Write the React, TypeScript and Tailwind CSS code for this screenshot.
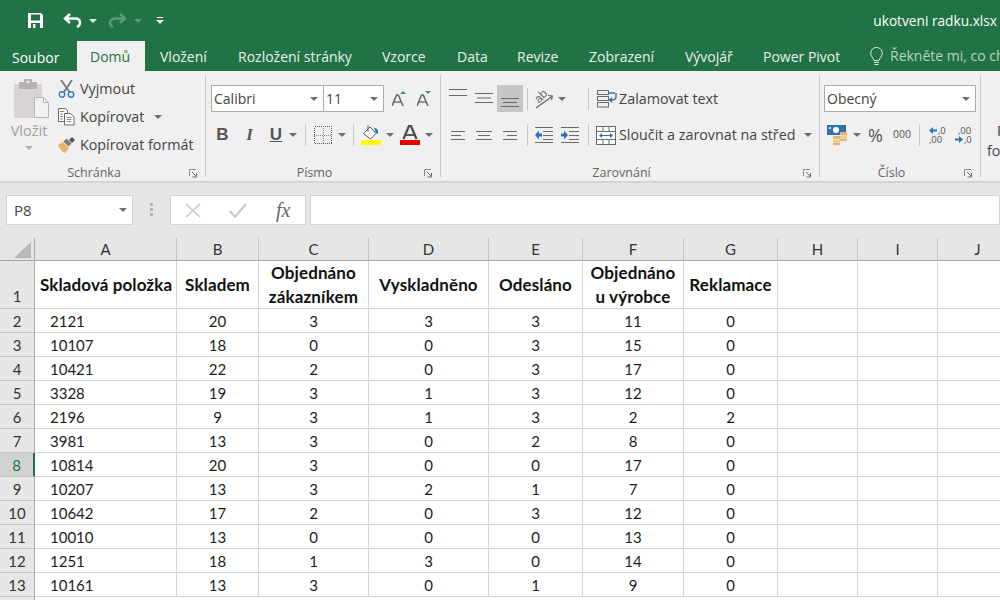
import React from "react";

const Caret = ({ c = "#6f6f6f" }: { c?: string }) => (
  <svg width="8" height="4" viewBox="0 0 8 4" className="block shrink-0">
    <path d="M0 0h8L4 4z" fill={c} />
  </svg>
);

const Launcher = () => (
  <svg width="9" height="9" viewBox="0 0 9 9" className="block shrink-0">
    <path d="M0.5 7V0.5H7" fill="none" stroke="#8a8a8a" />
    <path d="M3 3l4 4M7.500 4v4h-4" fill="none" stroke="#6a6a6a" />
  </svg>
);

const Sep = ({ h = "h-[22px]" }: { h?: string }) => <div className={`w-px ${h} bg-[#c6c6c6] shrink-0`} />;

const Lines = ({ w, x = [0, 0, 0, 0], n = 3, gap = 4 }: { w: number[]; x?: number[]; n?: number; gap?: number }) => (
  <svg width="18" height={(n - 1) * gap + 2} className="block">
    {w.slice(0, n).map((l, i) => (
      <rect key={i} x={x[i]} y={i * gap} width={l} height="1" fill="#6a6a6a" />
    ))}
  </svg>
);

const SaveIcon = () => (
  <svg width="17" height="17" viewBox="0 0 17 17" className="block">
    <path d="M1 1h13l2 2v13H1z" fill="#fff" />
    <rect x="4" y="2.500" width="9" height="6" fill="#217346" />
    <rect x="4" y="11" width="9" height="5" fill="#217346" />
    <rect x="6" y="12" width="2.500" height="4" fill="#fff" />
  </svg>
);

const UndoIcon = ({ c = "#fff" }: { c?: string }) => (
  <svg width="19" height="15" viewBox="0 0 19 15" className="block">
    <path d="M7 1L2 5.500 7 10" fill="none" stroke={c} strokeWidth="2.400" />
    <path d="M3 5.500h9c3.500 0 5 2 5 4s-1 3.500-3 4.500" fill="none" stroke={c} strokeWidth="2.400" />
  </svg>
);

const RedoIcon = ({ c = "#fff" }: { c?: string }) => (
  <svg width="19" height="15" viewBox="0 0 19 15" className="block">
    <path d="M12 1l5 4.500L12 10" fill="none" stroke={c} strokeWidth="2.400" />
    <path d="M16 5.500H7C3.500 5.500 2 7.500 2 9.500s1 3.500 3 4.500" fill="none" stroke={c} strokeWidth="2.400" />
  </svg>
);

const PasteIcon = () => (
  <svg width="36" height="40" viewBox="0 0 36 40" className="block">
    <rect x="0" y="5" width="28" height="34" rx="1" fill="#d8d4d6" />
    <rect x="5" y="3" width="18" height="7" fill="#b5b2b3" />
    <rect x="10" y="0" width="8" height="5" rx="1" fill="#b5b2b3" />
    <rect x="12.500" y="2" width="3" height="2" fill="#e8e8e8" />
    <path d="M20.500 18.500h9l5 5v15h-14z" fill="#f3f1f3" stroke="#b9b6b8" />
    <path d="M29.500 18.500v5h5" fill="none" stroke="#b9b6b8" />
  </svg>
);

const CutIcon = () => (
  <svg width="18" height="18" viewBox="0 0 18 18" className="block">
    <path d="M3 0l8.500 12M14 0L6 12" fill="none" stroke="#777" strokeWidth="1.800" />
    <circle cx="4" cy="14.500" r="2.700" fill="none" stroke="#3f78b5" strokeWidth="1.400" />
    <circle cx="13" cy="14.500" r="2.700" fill="none" stroke="#3f78b5" strokeWidth="1.400" />
  </svg>
);

const CopyIcon = () => (
  <svg width="17" height="18" viewBox="0 0 17 18" className="block">
    <path d="M0.500 0.500h7l2 2v3h-3v8h-6z" fill="#fff" stroke="#6a6a6a" />
    <path d="M6.500 5.500h6l3.500 3.500v8H6.500z" fill="#fff" stroke="#6a6a6a" />
    <path d="M2 3.500h4M2 6h3M2 8.500h3M2 11h3M8.500 9.500h5M8.500 11.500h5M8.500 13.500h5" stroke="#8a8a8a" />
  </svg>
);

const BrushIcon = () => (
  <svg width="18" height="16" viewBox="0 0 18 16" className="block">
    <path d="M0 8l5-3 6 6-4 5c-2 0-5-4-7-8z" fill="#e8b463" />
    <path d="M5.500 4.500l3-3 5 5-3 3z" fill="#7a7a7a" />
    <path d="M11 3l3-3 3 3-3 3z" fill="#555" />
  </svg>
);

const GrowA = ({ up }: { up: boolean }) => (
  <svg width="15" height="15" viewBox="0 0 15 15" className="block">
    <path d="M0 15L4.500 4h1.800L11 15" fill="none" stroke="#6a6a6a" strokeWidth="1.600" />
    <path d="M2 11h7" stroke="#6a6a6a" strokeWidth="1.400" />
    {up ? <path d="M8 3l3-3 3 3z" fill="#4b7fb3" /> : <path d="M8 0h6l-3 3z" fill="#4b7fb3" />}
  </svg>
);

const BordersIcon = () => (
  <svg width="18" height="18" viewBox="0 0 18 18" className="block" shapeRendering="crispEdges">
    <rect x="0.500" y="0.500" width="17" height="17" fill="none" stroke="#5a5a5a" strokeDasharray="1 1" />
    <path d="M9.500 0v18M0 9.500h18" stroke="#8a8a8a" strokeDasharray="1 1" />
  </svg>
);

const FillIcon = () => (
  <svg width="20" height="20" viewBox="0 0 20 20" className="block">
    <path d="M2.500 8.500L9 2l6 6.500-5.500 5.500z" fill="#fff" stroke="#555" />
    <path d="M7 0.500v6" stroke="#555" />
    <path d="M13 3c3 0 4.500 2 4 6l-2-1z" fill="#2f72b0" />
    <rect x="0" y="15" width="20" height="5" fill="#ffff00" />
  </svg>
);

const FontColorIcon = () => (
  <svg width="20" height="20" viewBox="0 0 20 20" className="block">
    <path d="M3.500 14L9 1h2l5.500 13" fill="none" stroke="#4a4a4a" strokeWidth="2.200" />
    <path d="M6 10h8" stroke="#4a4a4a" strokeWidth="1.800" />
    <rect x="0" y="15" width="20" height="5" fill="#e60000" />
  </svg>
);

const OrientIcon = () => (
  <svg width="20" height="20" viewBox="0 0 20 20" className="block overflow-visible">
    <path d="M2 19L18 7.500M14 6.500l4.500.5-1 4" fill="none" stroke="#666" strokeWidth="1.200" />
    <g transform="rotate(-45 7 7)">
      <text x="0" y="11" fontSize="12" fill="#6a6a6a" fontFamily="Liberation Sans, sans-serif">ab</text>
    </g>
  </svg>
);

const WrapIcon = () => (
  <svg width="20" height="18" viewBox="0 0 20 18" className="block">
    <rect x="0.500" y="0.500" width="11" height="4" fill="none" stroke="#6a6a6a" />
    <rect x="0.500" y="6.500" width="11" height="4" fill="none" stroke="#6a6a6a" />
    <rect x="0.500" y="12.500" width="11" height="4.500" fill="none" stroke="#6a6a6a" />
    <path d="M12 3h6M19 3v4c0 2-2 3-5 3" fill="none" stroke="#2f72b0" strokeWidth="1.400" />
    <path d="M15 7l-3.500 3 3.500 3z" fill="#2f72b0" />
  </svg>
);

const MergeIcon = () => (
  <svg width="20" height="19" viewBox="0 0 20 19" className="block">
    <rect x="0.500" y="0.500" width="19" height="18" fill="#fff" stroke="#6a6a6a" />
    <path d="M0 5.500h20M0 13.500h20M7 0v5M13 0v5M7 14v5M13 14v5" stroke="#6a6a6a" />
    <path d="M4 9.500h12" stroke="#2f72b0" />
    <path d="M6 7l-3 2.500L6 12zM14 7l3 2.500-3 2.500z" fill="#2f72b0" />
  </svg>
);

const IndentIcon = ({ right }: { right: boolean }) => (
  <svg width="18" height="16" viewBox="0 0 18 16" className="block">
    <path d="M0 .5h18M8 4.500h10M8 8.500h10M8 12.500h10M0 15.500h18" stroke="#6a6a6a" fill="none" />
    {right ? (
      <path d="M0 6.500h3V3.500l4 4.500-4 4.500V9.500H0z" fill="#2f72b0" />
    ) : (
      <path d="M7 6.500H4V3.500L0 8l4 4.500V9.500h3z" fill="#2f72b0" />
    )}
  </svg>
);

const CurrencyIcon = () => (
  <svg width="20" height="20" viewBox="0 0 20 20" className="block">
    <rect x="0" y="0" width="19" height="10" fill="#2f72b0" />
    <circle cx="9" cy="5" r="3" fill="#fff" />
    <rect x="2" y="2" width="2" height="2" fill="#cfe0f0" />
    <rect x="6" y="11" width="7" height="3" fill="#e9b46b" />
    <rect x="6" y="14.500" width="7" height="2.500" fill="#f1c98f" />
    <rect x="6" y="17.500" width="7" height="2.500" fill="#e9b46b" />
    <rect x="13" y="7" width="7" height="3" fill="#e9b46b" />
    <rect x="13" y="10.500" width="7" height="2.500" fill="#f1c98f" />
    <rect x="13" y="13.500" width="7" height="2.500" fill="#e9b46b" />
  </svg>
);

const Arrow = ({ left }: { left: boolean }) => (
  <svg width="8" height="7" viewBox="0 0 8 7" className="block shrink-0">
    {left ? <path d="M8 2.500H4V0L0 3.500 4 7V4.500h4z" fill="#2f72b0" /> : <path d="M0 2.500h4V0l4 3.500L4 7V4.500H0z" fill="#2f72b0" />}
  </svg>
);

const Combo = ({ text, w }: { text: string; w: string }) => (
  <div className={`${w} h-[27px] bg-white border border-[#ababab] flex items-center justify-between pl-[2px] pr-[5px] text-[14px] text-[#444] shrink-0`}>
    <span>{text}</span>
    <Caret />
  </div>
);

const GroupLabel = ({ label }: { label: string }) => (
  <div className="h-[12px] pt-[4px] flex items-center text-[12.500px] text-[#666]">
    <span className="flex-1 text-center">{label}</span>
    <span className="w-[17px] pr-[7px] flex justify-end">
      <Launcher />
    </span>
  </div>
);

const tabs: [string, string][] = [
  ["Vložení", "w-[78px]"],
  ["Rozložení stránky", "w-[144px]"],
  ["Vzorce", "w-[75px]"],
  ["Data", "w-[60px]"],
  ["Revize", "w-[72px]"],
  ["Zobrazení", "w-[96px]"],
  ["Vývojář", "w-[78px]"],
  ["Power Pivot", "w-[107px]"],
];

const cols = ["A", "B", "C", "D", "E", "F", "G", "H", "I", "J"];
const data: (string | number)[][] = [
  [2121, 20, 3, 3, 3, 11, 0],
  [10107, 18, 0, 0, 3, 15, 0],
  [10421, 22, 2, 0, 3, 17, 0],
  [3328, 19, 3, 1, 3, 12, 0],
  [2196, 9, 3, 1, 3, 2, 2],
  [3981, 13, 3, 0, 2, 8, 0],
  [10814, 20, 3, 0, 0, 17, 0],
  [10207, 13, 3, 2, 1, 7, 0],
  [10642, 17, 2, 0, 3, 12, 0],
  [10010, 13, 0, 0, 0, 13, 0],
  [1251, 18, 1, 3, 0, 14, 0],
  [10161, 13, 3, 0, 1, 9, 0],
];

const BoldCell = ({ children, left }: { children?: React.ReactNode; left?: boolean }) => (
  <div className={`border-r border-b border-[#d4d4d4] flex flex-col justify-center font-bold text-[17px] tracking-[0.1px] text-[#111] leading-[24px] whitespace-nowrap ${left ? "pl-[5px] text-left" : "text-center"}`}>
    {children}
  </div>
);

export default function App() {
  return (
    <div className="w-[1000px] h-[600px] overflow-hidden bg-white font-['Open_Sans',sans-serif]">
      {/* title bar */}
      <div className="h-[41px] bg-[#217346] flex items-center text-white">
        <div className="ml-[27px]"><SaveIcon /></div>
        <div className="ml-[19px]"><UndoIcon /></div>
        <div className="ml-[7px]"><Caret c="#e6efe9" /></div>
        <div className="ml-[11px]"><RedoIcon c="#5d9c7b" /></div>
        <div className="ml-[7px]"><Caret c="#5d9c7b" /></div>
        <div className="ml-[14px] flex flex-col items-center gap-[2px]">
          <div className="w-[6px] h-px bg-white" />
          <Caret c="#ffffff" />
        </div>
        <div className="ml-auto mr-[3px] mt-[1px] text-[13.700px]">ukotveni radku.xlsx</div>
      </div>
      {/* tabs */}
      <div className="h-[30px] bg-[#217346] flex text-[14px] text-white">
        <div className="w-[77px] pl-[12px] pt-[6px]">Soubor</div>
        <div className="w-[68px] pl-[13px] pt-[5px] bg-[#f0f0f0] text-[#217346]">Domů</div>
        {tabs.map(([t, w]) => (
          <div key={t} className={`${w} pl-[15px] pt-[5px] whitespace-nowrap text-[#e8f1ec]`}>{t}</div>
        ))}
        <div className="pl-[15px] flex items-center gap-[7px] whitespace-nowrap overflow-hidden flex-1">
          <svg width="13" height="19" viewBox="0 0 13 19" className="block shrink-0">
            <path d="M4 13.500C3.500 11 .7 9.500.7 6.200a5.800 5.800 0 0 1 11.600 0C12.300 9.500 9.500 11 9 13.500z" fill="none" stroke="#dfeae4" />
            <path d="M4 15.500h5M4.500 17.500h4" stroke="#dfeae4" />
          </svg>
          <span className="text-[#b7d3c4] relative top-[-1px]">Řekněte mi, co chcete udělat</span>
        </div>
      </div>
      {/* ribbon */}
      <div className="h-[112px] bg-[#f0f0f0] border-b-2 border-[#d4d4d4] flex py-[4px] text-[14.300px] text-[#444]">
        {/* Schránka */}
        <div className="w-[206px] border-r border-[#c9c9c9] flex flex-col shrink-0">
          <div className="flex-1 flex">
            <div className="w-[58px] flex flex-col items-center">
              <div className="mt-[4px] ml-[6px]"><PasteIcon /></div>
              <div className="text-[#9f9f9f] mt-[2px] leading-[20px] text-[14.500px]">Vložit</div>
              <div className="mt-[5px]"><Caret c="#b0b0b0" /></div>
            </div>
            <div className="flex flex-col">
              {[
                [<CutIcon />, "Vyjmout", false],
                [<CopyIcon />, "Kopírovat", true],
                [<BrushIcon />, "Kopírovat formát", false],
              ].map(([ic, t, car], i) => (
                <div key={i} className="h-[28px] flex items-center whitespace-nowrap">
                  <div className="w-[22px]">{ic as React.ReactNode}</div>
                  <span>{t as string}</span>
                  {car && <span className="ml-[10px]"><Caret /></span>}
                </div>
              ))}
            </div>
          </div>
          <GroupLabel label="Schránka" />
        </div>
        {/* Písmo */}
        <div className="w-[235px] border-r border-[#c9c9c9] flex flex-col shrink-0">
          <div className="flex-1 pt-[10px]">
            <div className="flex items-center pl-[5px]">
              <Combo text="Calibri" w="w-[113px]" />
              <div className="-ml-px"><Combo text="11" w="w-[61px]" /></div>
              <div className="ml-[8px]"><GrowA up /></div>
              <div className="ml-[10px]"><GrowA up={false} /></div>
            </div>
            <div className="flex items-center pl-[5px] mt-[10px] h-[26px] text-[#555]">
              <div className="w-[23px] text-center font-bold text-[17px] font-['Liberation_Sans',sans-serif]">B</div>
              <div className="w-[31px] text-center font-bold italic text-[17px] font-['Liberation_Serif',serif]">I</div>
              <div className="w-[22px] text-center font-bold underline text-[17px] font-['Liberation_Sans',sans-serif]">U</div>
              <div className="w-[12px] flex justify-center"><Caret /></div>
              <div className="w-[12px] flex justify-center"><Sep /></div>
              <div className="w-[24px] flex justify-center"><BordersIcon /></div>
              <div className="w-[14px] flex justify-center"><Caret /></div>
              <div className="w-[8px] flex justify-center"><Sep /></div>
              <div className="w-[28px] flex justify-center"><FillIcon /></div>
              <div className="w-[10px] flex justify-center"><Caret /></div>
              <div className="w-[30px] flex justify-center"><FontColorIcon /></div>
              <div className="w-[8px] flex justify-center"><Caret /></div>
            </div>
          </div>
          <GroupLabel label="Písmo" />
        </div>
        {/* Zarovnání */}
        <div className="w-[379px] border-r border-[#c9c9c9] flex flex-col shrink-0">
          <div className="flex-1 pt-[10px]">
            <div className="flex items-center pl-[4px] h-[27px]">
              <div className="w-[26px] h-[27px] flex justify-center pt-[4px]"><Lines w={[18, 18]} gap={6} n={2} /></div>
              <div className="w-[26px] h-[27px] flex justify-center pt-[8px]"><Lines w={[18, 14, 18]} x={[0, 2, 0]} gap={4.500} /></div>
              <div className="w-[26px] h-[27px] flex justify-center pt-[13px] bg-[#c6c6c6]"><Lines w={[18, 14, 18]} x={[0, 2, 0]} /></div>
              <div className="w-[8px] flex justify-center"><Sep /></div>
              <div className="w-[26px] flex justify-center"><OrientIcon /></div>
              <div className="w-[10px] flex justify-center"><Caret /></div>
              <div className="w-[22px] flex justify-end"><Sep /></div>
              <div className="ml-[8px]"><WrapIcon /></div>
              <span className="ml-[2px] whitespace-nowrap">Zalamovat text</span>
            </div>
            <div className="flex items-center pl-[4px] mt-[10px] h-[26px]">
              <div className="w-[26px] flex justify-center mt-[2px]"><Lines w={[14, 10, 14]} x={[2, 2, 2]} /></div>
              <div className="w-[26px] flex justify-center mt-[2px]"><Lines w={[16, 12, 16]} x={[1, 3, 1]} /></div>
              <div className="w-[26px] flex justify-center mt-[2px]"><Lines w={[14, 10, 14]} x={[2, 6, 2]} /></div>
              <div className="w-[8px] flex justify-center"><Sep /></div>
              <div className="w-[26px] flex justify-center"><IndentIcon right={false} /></div>
              <div className="w-[26px] flex justify-center"><IndentIcon right /></div>
              <div className="w-[6px] flex justify-end"><Sep /></div>
              <div className="ml-[7px]"><MergeIcon /></div>
              <span className="ml-[3px] whitespace-nowrap">Sloučit a zarovnat na střed</span>
              <span className="ml-[9px]"><Caret /></span>
            </div>
          </div>
          <GroupLabel label="Zarovnání" />
        </div>
        {/* Číslo */}
        <div className="w-[161px] border-r border-[#c9c9c9] flex flex-col shrink-0">
          <div className="flex-1 pt-[10px]">
            <div className="pl-[4px]"><Combo text="Obecný" w="w-[152px]" /></div>
            <div className="flex items-center pl-[7px] mt-[10px] h-[26px]">
              <CurrencyIcon />
              <div className="ml-[6px]"><Caret /></div>
              <span className="ml-[7px] text-[18px] leading-none text-[#555]">%</span>
              <span className="ml-[10px] text-[10.500px] text-[#555]">000</span>
              <div className="ml-[8px]"><Sep /></div>
              <div className="ml-[9px] w-[17px] text-[9.500px] leading-[9px] text-[#555]">
                <div className="flex items-center gap-[1px]"><Arrow left /><span>,0</span></div>
                <div>,00</div>
              </div>
              <div className="ml-[9px] w-[17px] text-[9.500px] leading-[9px] text-[#555]">
                <div className="pl-[3px]">,00</div>
                <div className="flex items-center gap-[1px]"><Arrow left={false} /><span>,0</span></div>
              </div>
            </div>
          </div>
          <GroupLabel label="Číslo" />
        </div>
        <div className="flex-1 overflow-hidden pt-[46px] leading-[20px]">
          <div className="pl-[16px]">P</div>
          <div className="pl-[6px]">fo</div>
        </div>
      </div>
      {/* formula bar */}
      <div className="h-[55px] bg-[#e6e6e6] flex items-start pt-[12px]">
        <div className="ml-[6px] w-[127px] h-[30px] bg-white border border-[#d4d4d4] flex items-center justify-between pl-[7px] pr-[5px] text-[15px] text-[#444]">
          <span>P8</span>
          <Caret />
        </div>
        <div className="ml-[17px] mt-[8px] flex flex-col gap-[2px]">
          <div className="w-[3px] h-[3px] bg-[#b5b5b5]" />
          <div className="w-[3px] h-[3px] bg-[#b5b5b5]" />
          <div className="w-[3px] h-[3px] bg-[#b5b5b5]" />
        </div>
        <div className="ml-[17px] w-[136px] h-[30px] bg-white border border-[#d4d4d4] flex items-center">
          <svg width="16" height="15" viewBox="0 0 16 15" className="ml-[14px] block">
            <path d="M1 1l14 13M15 1L1 14" stroke="#c9c9c9" strokeWidth="1.600" />
          </svg>
          <svg width="18" height="15" viewBox="0 0 18 15" className="ml-[28px] block">
            <path d="M1 8l5 6L17 1" fill="none" stroke="#c9c9c9" strokeWidth="2" />
          </svg>
          <span className="ml-[29px] text-[20px] italic font-['Liberation_Serif',serif] text-[#666]">fx</span>
        </div>
        <div className="ml-[4px] flex-1 h-[30px] bg-white border border-[#d4d4d4]" />
      </div>
      {/* sheet */}
      <div className="grid grid-cols-[35px_142px_82px_110px_120px_94px_101px_94px_80px_80px_80px] grid-rows-[23px_48px] auto-rows-[24px] text-[15px] text-[#1c1c1c] font-['Lato','Open_Sans',sans-serif]">
        <div className="bg-[#e6e6e6] border-r border-b border-[#a8a8a8] flex items-end justify-end pr-[3px] pb-[2px]">
          <svg width="17" height="16" viewBox="0 0 17 16" className="block">
            <path d="M17 0v16H0z" fill="#b8b8b8" />
          </svg>
        </div>
        {cols.map((c) => (
          <div key={c} className="bg-[#e6e6e6] border-r border-b border-r-[#c6c6c6] border-b-[#a8a8a8] flex items-center justify-center text-[#333]">{c}</div>
        ))}

        <div className="bg-[#e6e6e6] border-r border-b border-r-[#a8a8a8] border-b-[#c6c6c6] flex items-end justify-center pb-[1px] text-[#333]">1</div>
        <BoldCell left>Skladová položka</BoldCell>
        <BoldCell>Skladem</BoldCell>
        <BoldCell><div>Objednáno</div><div>zákazníkem</div></BoldCell>
        <BoldCell>Vyskladněno</BoldCell>
        <BoldCell>Odesláno</BoldCell>
        <BoldCell><div>Objednáno</div><div>u výrobce</div></BoldCell>
        <BoldCell>Reklamace</BoldCell>
        <BoldCell />
        <BoldCell />
        <BoldCell />

        {data.map((row, i) => {
          const active = i === 6;
          return (
            <React.Fragment key={i}>
              <div
                className={
                  active
                    ? "bg-[#d2d2d2] border-r-2 border-b border-r-[#217346] border-b-[#c6c6c6] flex items-center justify-center pt-[2px] text-[#217346]"
                    : "bg-[#e6e6e6] border-r border-b border-r-[#a8a8a8] border-b-[#c6c6c6] flex items-center justify-center pt-[2px] text-[#333]"
                }
              >
                {i + 2}
              </div>
              {row.map((v, j) => (
                <div key={j} className={`border-r border-b border-[#d4d4d4] flex items-center pt-[2px] ${j === 0 ? "pl-[15px]" : "justify-center"}`}>
                  {v}
                </div>
              ))}
              <div className="border-r border-b border-[#d4d4d4]" />
              <div className="border-r border-b border-[#d4d4d4]" />
              <div className="border-r border-b border-[#d4d4d4]" />
            </React.Fragment>
          );
        })}
        <div className="bg-[#e6e6e6] border-r border-[#a8a8a8]" />
      </div>
    </div>
  );
}
